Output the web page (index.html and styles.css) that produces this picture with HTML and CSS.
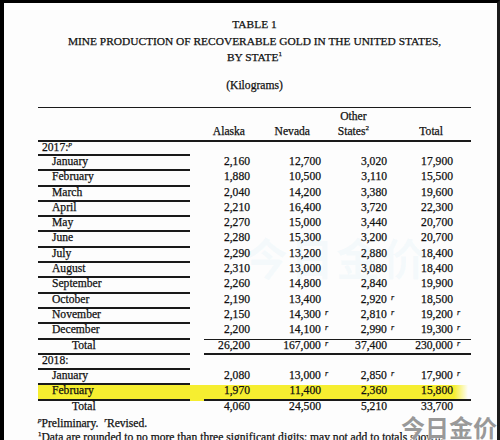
FILE: index.html
```html
<!DOCTYPE html>
<html>
<head>
<meta charset="utf-8">
<link rel="stylesheet" href="styles.css">
</head>
<body>
<div class="page">
  <div class="sheet">
    <div class="title">TABLE 1<br>MINE PRODUCTION OF RECOVERABLE GOLD IN THE UNITED STATES,<br>BY STATE<sup class="fn">1</sup></div>
    <div class="units">(Kilograms)</div>
    <div class="head">
      <div></div><div></div>
      <div class="hnums">
        <span class="h h1">Alaska</span>
        <span class="h h2">Nevada</span>
        <span class="h h3"><span class="stack">Other<br>States<sup class="fn">2</sup></span></span>
        <span class="h h4">Total</span>
      </div>
    </div>
    <div class="row first"><div class="lab yr">2017:<sup class="pm">p</sup></div><div></div><div class="nums"></div></div>
    <div class="row"><div class="lab m">January</div><div></div><div class="nums"><span>2,160</span><span>12,700</span><span>3,020</span><span>17,900</span></div></div>
    <div class="row"><div class="lab m">February</div><div></div><div class="nums"><span>1,880</span><span>10,500</span><span>3,110</span><span>15,500</span></div></div>
    <div class="row"><div class="lab m">March</div><div></div><div class="nums"><span>2,040</span><span>14,200</span><span>3,380</span><span>19,600</span></div></div>
    <div class="row"><div class="lab m">April</div><div></div><div class="nums"><span>2,210</span><span>16,400</span><span>3,720</span><span>22,300</span></div></div>
    <div class="row"><div class="lab m">May</div><div></div><div class="nums"><span>2,270</span><span>15,000</span><span>3,440</span><span>20,700</span></div></div>
    <div class="row"><div class="lab m">June</div><div></div><div class="nums"><span>2,280</span><span>15,300</span><span>3,200</span><span>20,700</span></div></div>
    <div class="row"><div class="lab m">July</div><div></div><div class="nums"><span>2,290</span><span>13,200</span><span>2,880</span><span>18,400</span></div></div>
    <div class="row"><div class="lab m">August</div><div></div><div class="nums"><span>2,310</span><span>13,000</span><span>3,080</span><span>18,400</span></div></div>
    <div class="row"><div class="lab m">September</div><div></div><div class="nums"><span>2,260</span><span>14,800</span><span>2,840</span><span>19,900</span></div></div>
    <div class="row"><div class="lab m">October</div><div></div><div class="nums"><span>2,190</span><span>13,400</span><span>2,920<i class="r">r</i></span><span>18,500</span></div></div>
    <div class="row"><div class="lab m">November</div><div></div><div class="nums"><span>2,150</span><span>14,300<i class="r">r</i></span><span>2,810<i class="r">r</i></span><span>19,200<i class="r">r</i></span></div></div>
    <div class="row dec"><div class="lab m">December</div><div></div><div class="nums"><span>2,200</span><span>14,100<i class="r">r</i></span><span>2,990<i class="r">r</i></span><span>19,300<i class="r">r</i></span></div></div>
    <div class="row tot"><div class="lab t">Total</div><div></div><div class="nums"><span>26,200</span><span>167,000<i class="r">r</i></span><span>37,400</span><span>230,000<i class="r">r</i></span></div></div>
    <div class="row"><div class="lab yr">2018:</div><div></div><div class="nums"></div></div>
    <div class="row"><div class="lab m">January</div><div></div><div class="nums"><span>2,080</span><span>13,000<i class="r">r</i></span><span>2,850<i class="r">r</i></span><span>17,900<i class="r">r</i></span></div></div>
    <div class="row feb"><div class="lab m">February</div><div></div><div class="nums"><span>1,970</span><span>11,400</span><span>2,360</span><span>15,800</span></div></div>
    <div class="row last"><div class="lab t">Total</div><div></div><div class="nums"><span>4,060</span><span>24,500</span><span>5,210</span><span>33,700</span></div></div>
    <div class="notes">
      <div><sup class="pm">p</sup>Preliminary.&nbsp; <sup class="pm">r</sup>Revised.</div>
      <div><sup class="fn">1</sup>Data are rounded to no more than three significant digits; may not add to totals shown.</div>
    </div>
  </div>
  <div class="wm-center">今日金价</div>
  <div class="wm-corner">今日金价</div>
</div>
</body>
</html>
```

FILE: styles.css
```css
html, body {
  margin: 0;
  padding: 0;
  background: #fff;
}

.page {
  position: relative;
  width: 500px;
  height: 440px;
  box-sizing: border-box;
  border-top: 3px solid #000;
  border-left: 4px solid #000;
  border-right: 3px solid #1c1c1c;
  background: #fdfdfd;
  overflow: hidden;
  font-family: "Liberation Serif", "Times New Roman", serif;
  color: #111;
}

.sheet {
  width: 433px;
  margin-left: 34px;
  -webkit-text-stroke: 0.25px #111;
}

.title {
  padding-top: 13px;
  text-align: center;
  font-size: 11.4px;
  line-height: 16.5px;
}

.fn {
  font-size: 7px;
  vertical-align: 5px;
  line-height: 0;
}

.pm {
  font-size: 7px;
  font-style: italic;
  vertical-align: 5px;
  line-height: 0;
}

.units {
  margin-top: 12px;
  text-align: center;
  font-size: 11.6px;
  line-height: 16.5px;
}

.head {
  margin-top: 13px;
  display: grid;
  grid-template-columns: 152px 14px 267px;
  border-top: 1px solid #1a1a1a;
  border-bottom: 2px solid #1a1a1a;
  padding: 0.5px 0 1.5px;
  font-size: 11.6px;
  line-height: 15px;
}

.hnums {
  display: grid;
  grid-template-columns: 46px 71px 66px 66px 18px;
  align-items: end;
}

.h {
  text-align: right;
}

.h1 { padding-right: 5px; }
.h2 { padding-right: 11px; }
.h3 { padding-right: 18px; }
.h4 { padding-right: 10px; }

.stack {
  display: inline-block;
  text-align: center;
}

.row {
  display: grid;
  grid-template-columns: 152px 14px 267px;
  height: 15.3px;
  font-size: 11.6px;
}

.row.first {
  height: 14px;
}

.lab {
  box-sizing: border-box;
  border-bottom: 2px solid #1a1a1a;
  line-height: 12px;
  white-space: nowrap;
}

.lab.yr { padding-left: 4px; }
.lab.m { padding-left: 14px; }
.lab.t { padding-left: 34px; }

.nums {
  box-sizing: border-box;
  display: grid;
  grid-template-columns: 46px 71px 66px 66px 18px;
  line-height: 12px;
}

.nums span {
  text-align: right;
  white-space: nowrap;
}

.r {
  font-size: 8px;
  font-style: italic;
  vertical-align: 3px;
  margin-left: 4px;
  margin-right: -7px;
  line-height: 0;
}

.row.dec .nums {
  border-bottom: 1px solid #1a1a1a;
}

.row.tot .nums {
  border-bottom: 2px solid #1a1a1a;
}

.row.feb {
  background: linear-gradient(to right, #f6ee30 0, #f6ee30 416px, rgba(246, 238, 48, 0) 430px);
}

.row.feb .nums {
  border-bottom: 2px solid #1a1a1a;
}

.row.last .lab {
  border-bottom: none;
}

.notes {
  font-size: 11.6px;
  line-height: 14px;
  padding-top: 1px;
  white-space: nowrap;
}

.wm-center {
  position: absolute;
  left: 240px;
  top: 222px;
  font-family: "Noto Sans CJK SC", sans-serif;
  font-weight: 700;
  font-size: 44px;
  color: rgba(120, 190, 235, 0.06);
  letter-spacing: 2px;
  pointer-events: none;
}

.wm-corner {
  position: absolute;
  left: 397px;
  top: 406px;
  font-family: "Noto Sans CJK SC", sans-serif;
  font-weight: 700;
  font-size: 24px;
  color: rgba(120, 120, 120, 0.75);
  text-shadow: 0 0 2px #fff, 0 0 2px #fff;
  pointer-events: none;
}
```
